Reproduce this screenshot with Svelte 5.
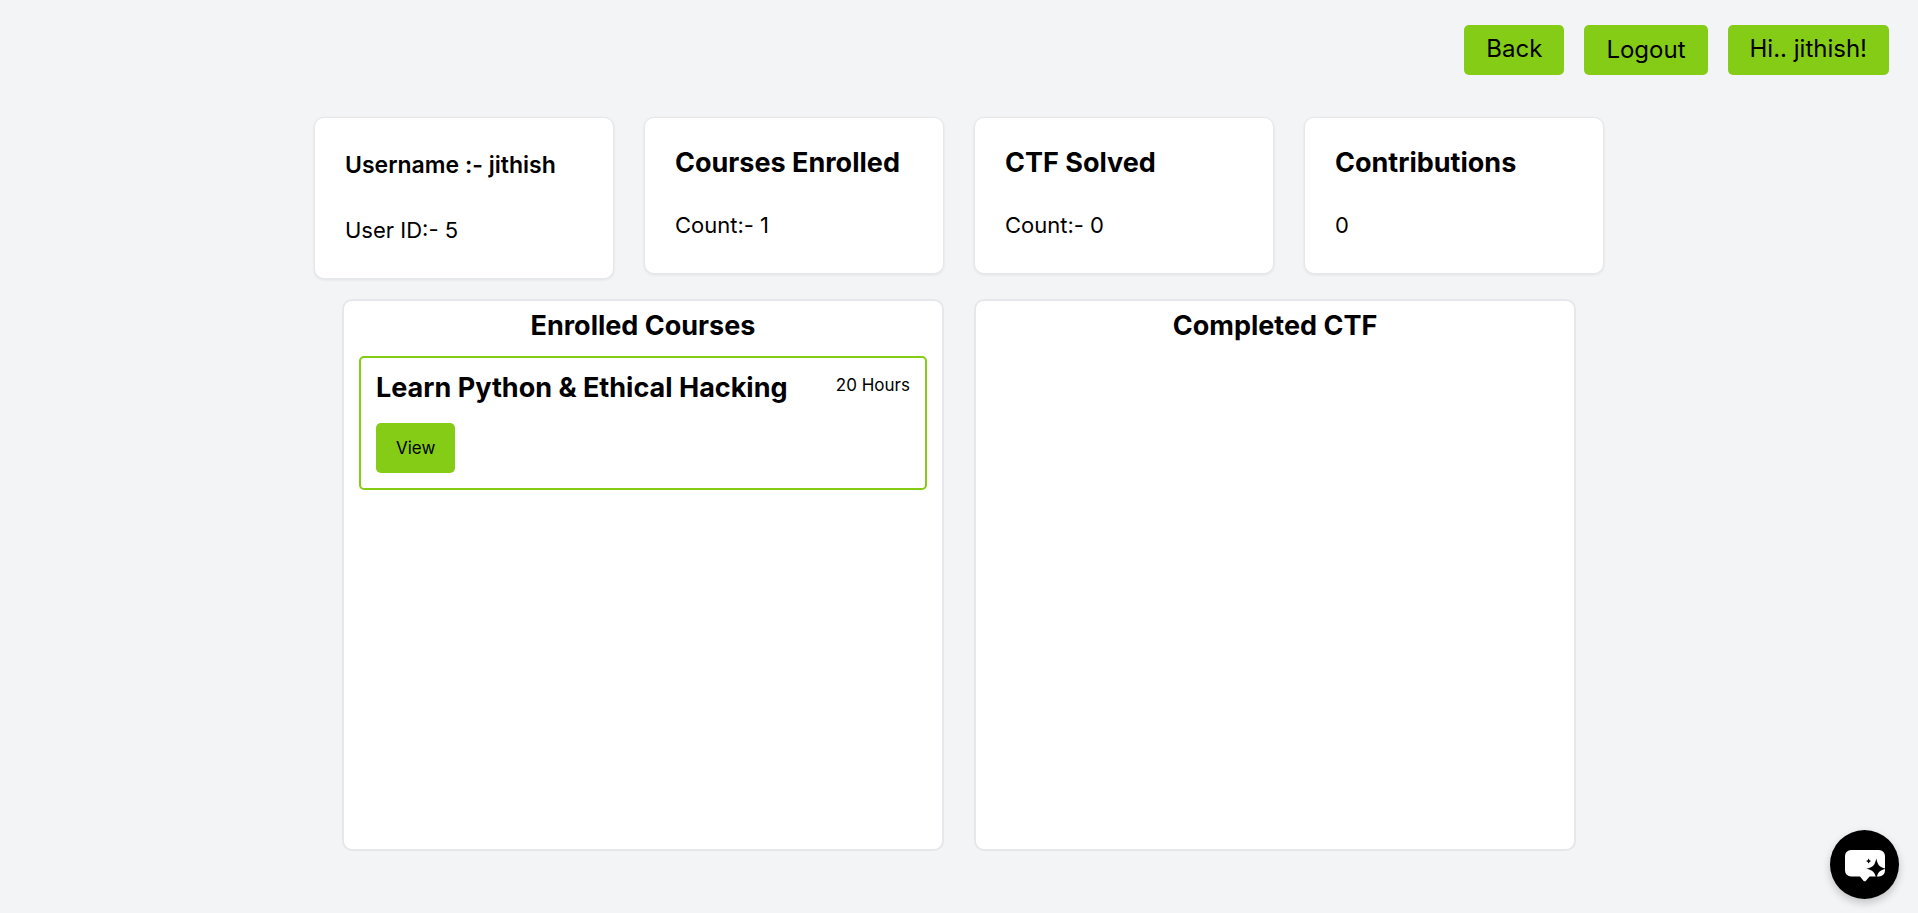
<script>
  const stats = [
    { title: 'Username :- jithish', value: 'User ID:- 5', user: true },
    { title: 'Courses Enrolled', value: 'Count:- 1' },
    { title: 'CTF Solved', value: 'Count:- 0' },
    { title: 'Contributions', value: '0' }
  ];
  const courses = [{ title: 'Learn Python & Ethical Hacking', duration: '20 Hours' }];
</script>

<div class="page">
  <header>
    <button class="btn raised">Back</button>
    <button class="btn">Logout</button>
    <button class="btn raised">Hi.. jithish!</button>
  </header>

  <main>
    <section class="stats">
      {#each stats as stat}
        <article class="stat" class:user={stat.user}>
          <h2>{stat.title}</h2>
          <p>{stat.value}</p>
        </article>
      {/each}
    </section>

    <section class="panels">
      <div class="panel">
        <h2>Enrolled Courses</h2>
        {#each courses as course}
          <article class="course">
            <div class="course-head">
              <h3>{course.title}</h3>
              <span>{course.duration}</span>
            </div>
            <button class="btn view">View</button>
          </article>
        {/each}
      </div>
      <div class="panel">
        <h2>Completed CTF</h2>
      </div>
    </section>
  </main>

  <button class="chat" aria-label="Open chat">
    <svg viewBox="0 0 69 69" aria-hidden="true">
      <path fill="#fff" d="M21 20h28a6 6 0 0 1 6 6v14.500a6 6 0 0 1-6 6H39.500l-3.300 4a2 2 0 0 1-3 0L30 46.500h-9a6 6 0 0 1-6-6V26a6 6 0 0 1 6-6z" />
      <path fill="#000" d="M46.300 28.500c1.400 6.800 3.500 9 10 10.200-6.500 1.200-8.600 3.400-10 10.200-1.400-6.800-3.500-9-10-10.200 6.500-1.200 8.600-3.400 10-10.200z" />
      <path fill="#000" d="M38.600 28.600l.9 1.600 1.600.9-1.600.9-.9 1.600-.9-1.600-1.600-.9 1.600-.9z" />
    </svg>
  </button>
</div>

<style>
  :global(body) {
    margin: 0;
    background: #f3f4f6;
  }

  .page {
    box-sizing: border-box;
    min-height: 100vh;
    color: #000;
    font-family: Inter, 'Liberation Sans', sans-serif;
  }

  h2,
  h3,
  p {
    margin: 0;
  }

  header {
    display: flex;
    justify-content: flex-end;
    gap: 20px;
    padding: 25px 29px 0;
  }

  .btn {
    box-sizing: border-box;
    height: 50px;
    padding: 0 22px;
    border: 0;
    border-radius: 5px;
    background: #84cc16;
    color: #000;
    font-family: inherit;
    font-size: 24px;
    line-height: 32px;
    cursor: pointer;
  }

  .btn.raised {
    padding-bottom: 3px;
  }

  main {
    padding: 42px 24px 0;
  }

  .stats {
    display: grid;
    grid-template-columns: repeat(4, 1fr);
    align-items: start;
    gap: 30px;
    max-width: 1290px;
    margin: 0 auto;
  }

  .stat {
    padding: 25px 30px 32px;
    border: 1px solid #e5e7eb;
    border-radius: 10px;
    background: #fff;
    box-shadow: 0 1px 3px rgba(0, 0, 0, 0.08);
  }

  .stat h2,
  .panel h2,
  .course h3 {
    font-size: 27px;
    font-weight: 700;
    line-height: 40px;
  }

  .stat p {
    margin-top: 26px;
    font-size: 22px;
    line-height: 32px;
  }

  .stat.user h2 {
    font-size: 23px;
    font-weight: 600;
    line-height: 45px;
  }

  .panels {
    display: grid;
    grid-template-columns: repeat(2, 1fr);
    gap: 30px;
    max-width: 1234px;
    margin: 20px auto 0;
  }

  .panel {
    box-sizing: border-box;
    min-height: calc(60vh + 4px);
    padding: 5px 15px 15px;
    border: 2px solid #e5e7eb;
    border-radius: 10px;
    background: #fff;
  }

  .panel h2 {
    text-align: center;
  }

  .course {
    margin-top: 10px;
    padding: 10px 15px 15px;
    border: 2px solid #84cc16;
    border-radius: 5px;
  }

  .course-head {
    display: flex;
    justify-content: space-between;
  }

  .course-head span {
    font-size: 17px;
    line-height: 34px;
  }

  .btn.view {
    display: block;
    margin-top: 15px;
    padding: 0 20px;
    font-size: 17px;
  }

  .chat {
    position: fixed;
    right: 19px;
    bottom: 14px;
    width: 69px;
    height: 69px;
    padding: 0;
    border: 0;
    border-radius: 50%;
    background: #000;
    box-shadow: 0 4px 8px rgba(0, 0, 0, 0.2);
    cursor: pointer;
  }

  .chat svg {
    display: block;
    width: 100%;
    height: 100%;
  }
</style>
